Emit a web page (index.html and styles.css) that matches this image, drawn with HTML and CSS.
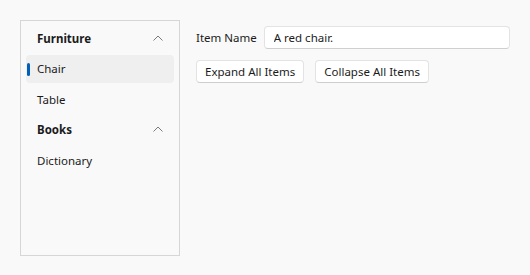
FILE: index.html
```html
<!DOCTYPE html>
<html lang="en">
<head>
  <meta charset="UTF-8" />
  <title>Tree View</title>
  <link rel="stylesheet" href="styles.css">
</head>
<body>
  <div class="page">
    <div class="tree">
      <div class="tree-item group">
        <span>Furniture</span>
        <svg class="chevron" width="10" height="6" viewBox="0 0 10 6"><path d="M0.5 5.5 L5 1 L9.5 5.5" fill="none" stroke="#7a7a7a" stroke-width="1"/></svg>
      </div>
      <div class="tree-item selected"><span class="indicator"></span><span>Chair</span></div>
      <div class="tree-item"><span>Table</span></div>
      <div class="tree-item group">
        <span>Books</span>
        <svg class="chevron" width="10" height="6" viewBox="0 0 10 6"><path d="M0.5 5.5 L5 1 L9.5 5.5" fill="none" stroke="#7a7a7a" stroke-width="1"/></svg>
      </div>
      <div class="tree-item"><span>Dictionary</span></div>
    </div>

    <div class="details">
      <div class="field">
        <label for="item-name">Item Name</label>
        <input type="text" id="item-name" value="A red chair.">
      </div>
      <div class="actions">
        <button>Expand All Items</button>
        <button>Collapse All Items</button>
      </div>
    </div>
  </div>
</body>
</html>
```

FILE: styles.css
```css
body {
  margin: 0;
  background: #f9f9f9;
  font-family: "Noto Sans", "Open Sans", sans-serif;
  font-size: 11.5px;
  color: #1b1b1b;
}

.page {
  display: flex;
  padding: 20px;
  gap: 16px;
}

.tree {
  flex-shrink: 0;
  width: 148px;
  height: 226px;
  border: 1px solid #d6d6d6;
  padding: 3px 5px 5px 5px;
}

.tree-item {
  position: relative;
  display: flex;
  align-items: center;
  justify-content: space-between;
  height: 28px;
  margin-bottom: 2.5px;
  padding: 0 11px;
  border-radius: 4px;
}

.tree-item.group {
  font-weight: bold;
}

.tree-item.selected {
  background: #efefef;
}

.indicator {
  position: absolute;
  left: 1px;
  top: 8px;
  width: 3px;
  height: 13px;
  border-radius: 2px;
  background: #005fb8;
}

.chevron {
  margin-top: -1px;
}

.details {
  flex: 1;
  padding-top: 6px;
}

.field {
  display: flex;
  align-items: center;
  gap: 7px;
}

label {
  white-space: nowrap;
}

input {
  width: 246px;
  height: 23px;
  box-sizing: border-box;
  border: 1px solid #e3e3e3;
  border-bottom-color: #cfcfcf;
  border-radius: 4px;
  padding: 0 9px;
  font: inherit;
  color: #1b1b1b;
  background: #fff;
}

.actions {
  display: flex;
  gap: 11px;
  margin-top: 11px;
}

button {
  height: 23px;
  padding: 0 8px;
  border: 1px solid #e3e3e3;
  border-bottom-color: #cfcfcf;
  border-radius: 4px;
  background: #fff;
  font: inherit;
  color: #1b1b1b;
}
```
